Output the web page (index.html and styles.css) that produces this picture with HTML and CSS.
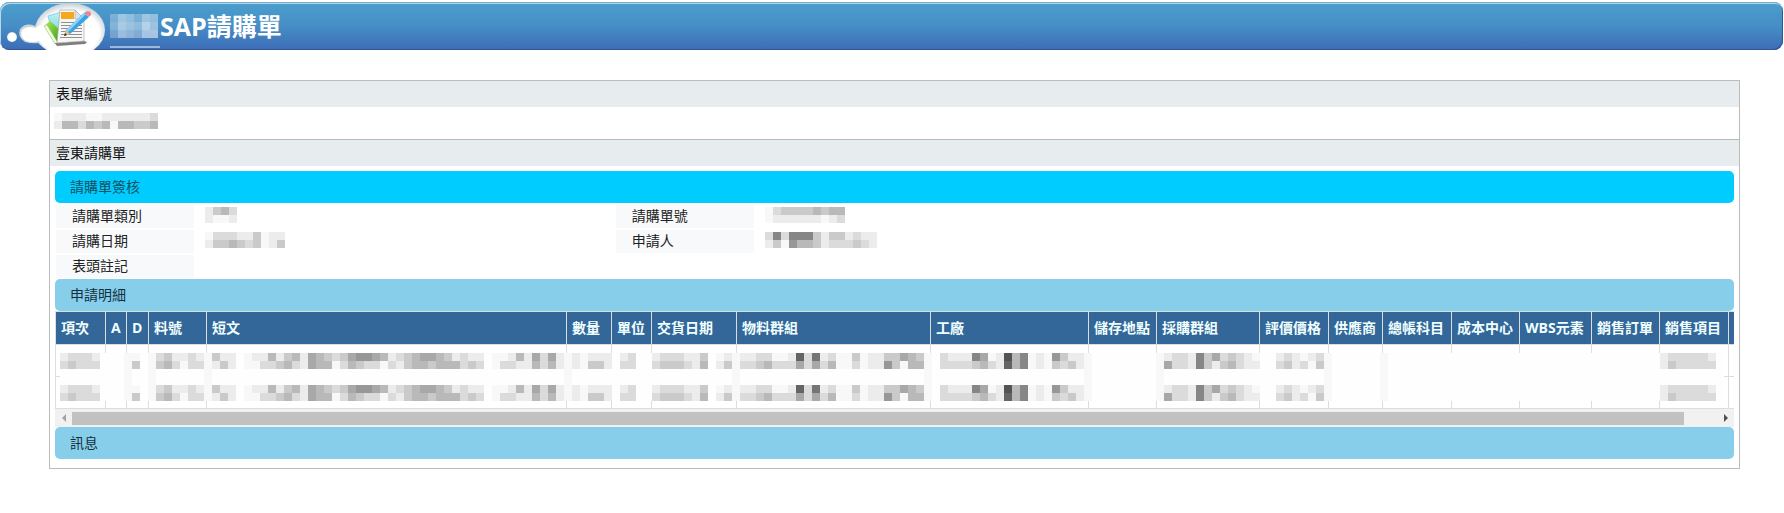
FILE: index.html
```
<!DOCTYPE html>
<html lang="zh-Hant">
<head>
    <meta charset="UTF-8">
    <meta name="viewport" content="width=device-width, initial-scale=1.0">
    <title>SAP請購單</title>
    <link rel="stylesheet" href="styles.css">
</head>
<body>
    <header class="banner">
        <svg class="logo" width="110" height="48" viewBox="0 0 110 48" aria-hidden="true">
            <defs>
                <radialGradient id="cloud" cx="0.5" cy="0.55" r="0.55">
                    <stop offset="0.75" stop-color="#ffffff"/>
                    <stop offset="1" stop-color="#c3cdd4"/>
                </radialGradient>
                <linearGradient id="green" x1="0" y1="0" x2="1" y2="1">
                    <stop offset="0" stop-color="#b4e85a"/>
                    <stop offset="1" stop-color="#2f9e12"/>
                </linearGradient>
                <linearGradient id="cyan" x1="0" y1="0" x2="0" y2="1">
                    <stop offset="0" stop-color="#c5f3f5"/>
                    <stop offset="1" stop-color="#5cc9d6"/>
                </linearGradient>
            </defs>
            <circle cx="12" cy="35" r="5" fill="url(#cloud)"/>
            <path d="M35 24 Q26 20 20 27 Q17 35 25 40 Q32 42 38 41 Q42 45 47 48 H60 V20 Z" fill="#cbd4da"/>
            <ellipse cx="70" cy="28" rx="35" ry="27" fill="url(#cloud)"/>
            <path d="M36 26 Q27 23 22 28 Q19 35 26 39 Q33 41 39 39 Q44 45 50 48 H88 L64 20 L38 24 Z" fill="#fff"/>
            <!-- notebooks -->
            <path d="M48 14 L64 9 L66 36 L54 40 Z" fill="url(#cyan)" stroke="#4fb3c4" stroke-width="0.5"/>
            <path d="M44 24 L50 19 L60 28 L60 41 L55 42 Z" fill="url(#green)"/>
            <path d="M44 24 L55 42 L58 41 L47 23 Z" fill="#f4fbe8" stroke="#8ccf5c" stroke-width="0.5"/>
            <!-- paper -->
            <path d="M55 41 L84 39 L87 40 L85 42 L57 44 Z" fill="#7d7d7d"/>
            <path d="M60 8 H75 L84 17 L84 39 L57 41 Z" fill="#f7f7f5" stroke="#a9a9a9" stroke-width="0.7"/>
            <path d="M75 8 L75 17 H84 Z" fill="#dfe3e6" stroke="#a9a9a9" stroke-width="0.7"/>
            <rect x="61" y="10" width="13" height="7" fill="#f5a81c"/>
            <path d="M61 20.500 H82 M61 23.500 H82 M61 26.500 H82 M61 29.500 H82 M61 32.500 H82 M60 35.500 H82" stroke="#8f8f8f" stroke-width="1"/>
            <!-- pencil -->
            <path d="M64 34 L66 28 L84 11 L89 15 L70 32 Z" fill="#39a3e3"/>
            <path d="M66 28 L84 11 L86 12 L68 30 Z" fill="#8bd4f7"/>
            <path d="M64 34 L66 28 L70 32 Z" fill="#f0c27a"/>
            <path d="M64 34 L65 31 L67 33 Z" fill="#222"/>
            <path d="M84 11 L87 9 Q92 9 91 13 L89 15 Z" fill="#e58a94"/>
        </svg>
        <span class="company"><svg class="mosaic tint" data-rows="476476/587697/476588"></svg></span>
        <h1>SAP請購單</h1>
    </header>

    <main class="panel">
        <h2 class="caption">表單編號</h2>
        <div class="form-no">
            <svg class="mosaic" data-rows="feeeffeeeeeed/ebbdbcbfbbccb"></svg>
        </div>

        <h2 class="caption divided">壹東請購單</h2>
        <div class="content">
            <h3 class="bar bar-main">請購單簽核</h3>
            <div class="fields">
                <div class="field first">
                    <span class="label">請購單類別</span>
                    <svg class="mosaic" data-rows="ecbd/effe"></svg>
                </div>
                <div class="field">
                    <span class="label">請購單號</span>
                    <svg class="mosaic" data-rows="fdccccbcbb/feeeeeefed"></svg>
                </div>
                <div class="field first">
                    <span class="label">請購日期</span>
                    <svg class="mosaic" data-rows="fdddeecfee/eccbcdcfec"></svg>
                </div>
                <div class="field">
                    <span class="label">申請人</span>
                    <svg class="mosaic" data-rows="d8d888ceccedee/ecf9bbcedddcde"></svg>
                </div>
                <div class="field first">
                    <span class="label">表頭註記</span>
                </div>
            </div>

            <h3 class="bar">申請明細</h3>
            <div class="table-wrap">
                <table class="detail">
                    <colgroup>
                        <col class="w50"><col class="w21"><col class="w22"><col class="w58"><col class="w360">
                        <col class="w45"><col class="w40"><col class="w85"><col class="w194"><col class="w158">
                        <col class="w68"><col class="w103"><col class="w69"><col class="w54"><col class="w69">
                        <col class="w68"><col class="w72"><col class="w68"><col class="w69"><col class="w45">
                    </colgroup>
                    <thead>
                        <tr>
                            <th>項次</th>
                            <th>A</th>
                            <th>D</th>
                            <th>料號</th>
                            <th>短文</th>
                            <th>數量</th>
                            <th>單位</th>
                            <th>交貨日期</th>
                            <th>物料群組</th>
                            <th>工廠</th>
                            <th>儲存地點</th>
                            <th>採購群組</th>
                            <th>評價價格</th>
                            <th>供應商</th>
                            <th>總帳科目</th>
                            <th>成本中心</th>
                            <th>WBS元素</th>
                            <th>銷售訂單</th>
                            <th>銷售項目</th>
                            <th></th>
                        </tr>
                    </thead>
                    <tbody id="detailRows"></tbody>
                </table>
                <svg class="cover" id="cover" width="1664" height="48" aria-hidden="true"></svg>
            </div>
            <div class="scrollbar">
                <button class="arrow left" aria-label="向左"></button>
                <div class="track"><div class="thumb"></div></div>
                <button class="arrow right" aria-label="向右"></button>
            </div>

            <h3 class="bar">訊息</h3>
        </div>
    </main>

    <script src="script.js"></script>
</body>
</html>
```
FILE: styles.css
```
* {
    box-sizing: border-box;
}
body {
    margin: 0;
    padding-top: 2px;
    background: white;
    color: #222;
    font-family: "Open Sans", "Noto Sans CJK TC", sans-serif;
    font-size: 14px;
    line-height: 20px;
}
h1, h2, h3 {
    margin: 0;
    font-size: 14px;
    font-weight: normal;
}
svg {
    display: block;
    flex: none;
}

/* banner */
.banner {
    display: flex;
    height: 48px;
    margin-right: 1px;
    border-radius: 9px;
    background: linear-gradient(#4b9fcd, #468ec6 50%, #3c6cb6);
    box-shadow: inset 0 1px 0 #79a9c4, inset 1px 2px 0 #b4d8ea, inset -1px -1px 0 #2f5794;
    overflow: hidden;
}
.company {
    width: 50px;
    margin-bottom: 2px;
    padding-top: 12px;
    border-bottom: 2px solid #9bb8de;
}
.banner h1 {
    color: white;
    font-size: 25px;
    font-weight: bold;
    line-height: 48px;
}

/* panel */
.panel {
    margin: 30px 44px 0 49px;
    border: 1px solid #bbb;
}
.caption {
    height: 26px;
    padding: 3px 6px;
    background: #e7ecef;
    color: #111;
}
.divided {
    height: 27px;
    border-top: 1px solid #bbb;
}
.form-no {
    height: 32px;
    padding: 6px 4px;
}
.content {
    padding: 5px 5px 9px;
}
.bar {
    height: 32px;
    padding: 6px 15px;
    border-radius: 5px;
    background: #87ceeb;
    color: #12303c;
}
.bar-main {
    background: #00ccff;
    color: #12505f;
}

/* fields */
.fields {
    display: grid;
    grid-template-columns: repeat(3, 1fr);
    row-gap: 2px;
    padding: 2px 0 1px;
}
.field {
    display: flex;
    align-items: flex-start;
    height: 23px;
}
.first {
    grid-column: 1;
}
.label {
    width: 138px;
    height: 23px;
    margin: 0 11px 0 1px;
    padding: 1px 16px;
    background: #f8f9fb;
}
.field .mosaic {
    margin-top: 2px;
}

/* detail table */
.table-wrap {
    position: relative;
    overflow: hidden;
}
.detail {
    width: 1718px;
    table-layout: fixed;
    border-collapse: collapse;
}
.detail th, .detail td {
    border: 1px solid #ddd;
}
.detail th {
    height: 33px;
    padding: 0 0 0 5px;
    background: #336699;
    color: #f0ffff;
    font-weight: bold;
    text-align: left;
    white-space: nowrap;
}
.detail td {
    height: 32px;
    padding: 0;
}
.w21 { width: 21px; }
.w22 { width: 22px; }
.w40 { width: 40px; }
.w45 { width: 45px; }
.w50 { width: 50px; }
.w54 { width: 54px; }
.w58 { width: 58px; }
.w68 { width: 68px; }
.w69 { width: 69px; }
.w72 { width: 72px; }
.w85 { width: 85px; }
.w103 { width: 103px; }
.w158 { width: 158px; }
.w194 { width: 194px; }
.w360 { width: 360px; }
.cover {
    position: absolute;
    left: 5px;
    bottom: 8px;
    background: #fefefe;
}

/* scrollbar */
.scrollbar {
    display: flex;
    align-items: center;
    height: 18px;
    background: #f1f1f1;
}
.arrow {
    display: flex;
    align-items: center;
    justify-content: center;
    width: 17px;
    height: 17px;
    padding: 0;
    border: none;
    background: none;
}
.arrow::before {
    content: "";
    border: 4px solid transparent;
}
.left::before {
    border-left-width: 0;
    border-right-color: #a3a3a3;
}
.right::before {
    border-right-width: 0;
    border-left-color: #505050;
}
.track {
    flex: 1;
}
.thumb {
    width: 98%;
    height: 13px;
    background: #c1c1c1;
}
```
FILE: script.js
```
const BLOCK = 8;

// each hex digit is one block: 0 is black, f is white
function drawRows(svg, rows, startX, startY) {
    rows.split("/").forEach((row, r) => {
        [...row].forEach((digit, c) => {
            addBlock(svg, (startX + c) * BLOCK, (startY + r) * BLOCK, BLOCK, digit);
        });
    });
}

function addBlock(svg, x, y, height, digit) {
    const level = parseInt(digit, 16);
    const rect = document.createElementNS("http://www.w3.org/2000/svg", "rect");
    rect.setAttribute("x", x);
    rect.setAttribute("y", y);
    rect.setAttribute("width", BLOCK);
    rect.setAttribute("height", height);
    if (svg.classList.contains("tint")) {
        rect.setAttribute("fill", "#fff");
        rect.setAttribute("fill-opacity", level / 15);
    } else {
        const grey = level === 15 ? 248 : level * 17 - 2;
        rect.setAttribute("fill", `rgb(${grey}, ${grey}, ${grey})`);
    }
    svg.appendChild(rect);
}

document.querySelectorAll(".mosaic").forEach(svg => {
    const rows = svg.dataset.rows.split("/");
    svg.setAttribute("width", rows[0].length * BLOCK);
    svg.setAttribute("height", rows.length * BLOCK);
    drawRows(svg, svg.dataset.rows, 0, 0);
});

// detail rows
const columns = document.querySelectorAll(".detail th").length;
const tbody = document.getElementById("detailRows");
for (let i = 0; i < 2; i++) {
    tbody.insertRow().innerHTML = "<td></td>".repeat(columns);
}

const masked = [
    [0, "eddde/dcddd"],
    [9, "f/c"],
    [12, "dceede/cbdfdd"],
    [19, "cee/ece"],
    [23, "feebecbeabcdca99abedcbaabce/ffddcbdeabbfdbcddfdecbbcbbb"],
    [50, "dee/dcd"],
    [54, "ffebeadae/fddeebdbe"],
    [64, "efeee/efcce"],
    [70, "ed/dd"],
    [74, "edddeec/dcccdeb"],
    [82, "fe/ec"],
    [85, "eeddffe6d7edffcfeeccabc/ddcbdddadadbffdfee9cfbb"],
    [110, "deee8afe5b8fef9cee/ddddcbde6b8fefcdce"],
    [138, "edde8cadcdef/adde8cecbdee"],
    [152, "edefed/dcedfc"],
    [200, "eddddde/ecddddd"]
];
const cover = document.getElementById("cover");
[8, 11, 18, 63, 84, 108, 128, 137, 158, 165].forEach(x => addBlock(cover, x * BLOCK, 0, 48, "f"));
masked.forEach(([x, rows]) => {
    drawRows(cover, rows, x, 0);
    drawRows(cover, rows, x, 4);
});
```
